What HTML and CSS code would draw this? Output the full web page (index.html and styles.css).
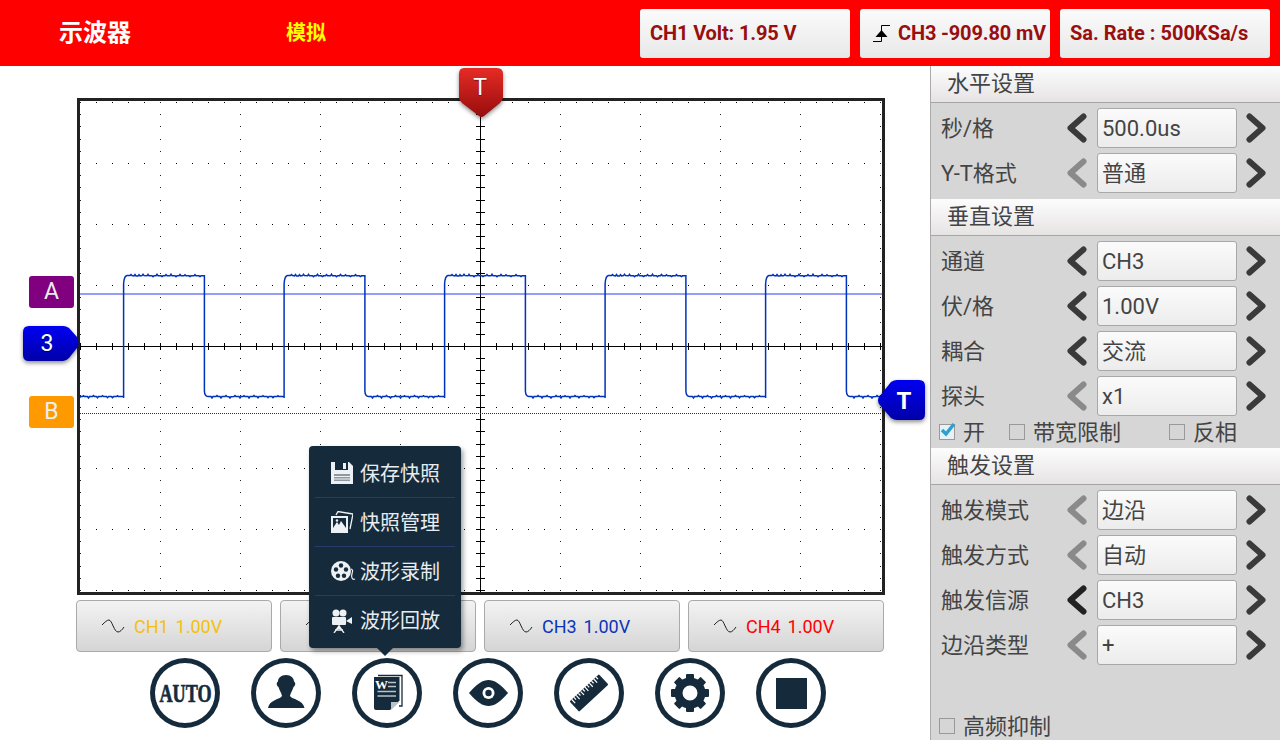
FILE: index.html
```html
<!DOCTYPE html>
<html lang="zh">
<head>
<meta charset="utf-8">
<title>示波器</title>
<link rel="stylesheet" href="styles.css">
</head>
<body>
<div class="app">
  <header class="topbar">
    <div class="title">示波器</div>
    <div class="mode">模拟</div>
    <div class="readouts">
      <div class="readout r1">CH1 Volt: 1.95 V</div>
      <div class="readout r2">
        <svg class="trig" width="18" height="17" viewBox="0 0 18 17"><path d="M0 16.5H8.5V.5H17" fill="none" stroke="#000"/><path d="M8.5 5L14.5 12H2.5Z" fill="#000"/></svg>
        <span>CH3 -909.80 mV</span>
      </div>
      <div class="readout r3">Sa. Rate : 500KSa/s</div>
    </div>
  </header>

  <div class="body">
    <main class="stage">
      <div class="scope">
        <svg class="grid" width="802" height="491" viewBox="80 101 802 491">
          <defs>
            <path id="period" fill="none" stroke="#0033bb" stroke-width="1.500" d="M123.6 398V284Q124 276 127 275.500H130l1-1 1 1 2 .4 1-1.400 1 1.400h2l1-1.200 1 1.200 2-.3 1-1.300 1 1.300 3 .2 1-1.500 1 1.500h3l1 1 1-1 2 0 1-1.400 1 1.400h3l1 .8 1-.8 2 0 1-1.200 1 1.200h3l1-1.600 1 1.600 3 0 1 .9 1-.9h2l1-1.300 1 1.300h3l1-1 1 1h3l1 .8 1-.8h3l1-1.100 1 1.100h3l1 .7 1-.7H204.400V391Q204.600 396.200 208 396.500h3l1 1.500 1-1.500h3l1-.9 1 .9h2l1 1.400 1-1.400h3l1-1 1 1 2 .3 1 1.200 1-1.200 3-.2 1-1 1 1h3l1 1.300 1-1.300h2l1-.8 1 .8h3l1 1.400 1-1.400h3l1-1 1 1h2l1 1.200 1-1.200h3l1-.9 1 .9h3l1 1.100 1-1.100h3l1 1 1-1h3l1-.8 1 .8H284.100"/>
          </defs>
          <g class="minor">
            <line x1="80" y1="102" x2="882" y2="102"/>
            <line x1="80" y1="163" x2="882" y2="163"/>
            <line x1="80" y1="224" x2="882" y2="224"/>
            <line x1="80" y1="285" x2="882" y2="285"/>
            <line x1="80" y1="407" x2="882" y2="407"/>
            <line x1="80" y1="468" x2="882" y2="468"/>
            <line x1="80" y1="529" x2="882" y2="529"/>
            <line x1="80" y1="590" x2="882" y2="590"/>
          </g>
          <g class="columns">
            <line x1="80.500" y1="102" x2="80.500" y2="592"/>
            <line x1="160.500" y1="102" x2="160.500" y2="592"/>
            <line x1="240.500" y1="102" x2="240.500" y2="592"/>
            <line x1="320.500" y1="102" x2="320.500" y2="592"/>
            <line x1="400.500" y1="102" x2="400.500" y2="592"/>
            <line x1="560.500" y1="102" x2="560.500" y2="592"/>
            <line x1="640.500" y1="102" x2="640.500" y2="592"/>
            <line x1="720.500" y1="102" x2="720.500" y2="592"/>
            <line x1="800.500" y1="102" x2="800.500" y2="592"/>
            <line x1="880.500" y1="102" x2="880.500" y2="592"/>
          </g>
          <g class="axes">
            <line x1="80" y1="346.500" x2="882" y2="346.500"/>
            <line x1="480.500" y1="101" x2="480.500" y2="592"/>
          </g>
          <line class="ticks-h" x1="80" y1="346.500" x2="882" y2="346.500"/>
          <line class="ticks-v" x1="480.500" y1="102" x2="480.500" y2="592"/>
          <line class="cursor-a" x1="80" y1="294" x2="882" y2="294"/>
          <line class="cursor-b" x1="80" y1="413.500" x2="882" y2="413.500"/>
          <use href="#period" x="-160.500"/>
          <use href="#period"/>
          <use href="#period" x="160.500"/>
          <use href="#period" x="321"/>
          <use href="#period" x="481.500"/>
          <use href="#period" x="642"/>
        </svg>
      </div>

      <div class="channels">
        <div class="channel ch1"><svg class="sine" width="24" height="14" viewBox="0 0 24 14"><path d="M1 6C4 3 6 1 8 1C11 1 13 13 17 13C19 13 21 11 23 8"/></svg><span>CH1&nbsp;&nbsp;1.00V</span></div>
        <div class="channel ch2"><svg class="sine" width="24" height="14" viewBox="0 0 24 14"><path d="M1 6C4 3 6 1 8 1C11 1 13 13 17 13C19 13 21 11 23 8"/></svg><span>CH2&nbsp;&nbsp;1.00V</span></div>
        <div class="channel ch3"><svg class="sine" width="24" height="14" viewBox="0 0 24 14"><path d="M1 6C4 3 6 1 8 1C11 1 13 13 17 13C19 13 21 11 23 8"/></svg><span>CH3&nbsp;&nbsp;1.00V</span></div>
        <div class="channel ch4"><svg class="sine" width="24" height="14" viewBox="0 0 24 14"><path d="M1 6C4 3 6 1 8 1C11 1 13 13 17 13C19 13 21 11 23 8"/></svg><span>CH4&nbsp;&nbsp;1.00V</span></div>
      </div>

      <div class="toolbar">
        <div class="tool">
          <svg width="70" height="70" viewBox="0 0 70 70"><text class="auto" x="9.500" y="43.500" textLength="52" lengthAdjust="spacingAndGlyphs">AUTO</text></svg>
        </div>
        <div class="tool">
          <svg width="70" height="70" viewBox="0 0 70 70" fill="#152b3c"><path d="M35 17C40 17 43 20 43 23.500C45 24.500 44.500 28 42.500 29C41.500 32.500 39.500 35 39 38C41 41.500 52 41.500 53.500 50H17C18.500 41.500 29 41.500 31 38C30.500 35 28.500 32.500 27.500 29C25.500 28 25 24.500 27 23.500C27 20 30 17 35 17Z"/></svg>
        </div>
        <div class="tool">
          <svg width="70" height="70" viewBox="0 0 70 70"><path d="M26 17.500H50V48H47" fill="none" stroke="#152b3c" stroke-width="1.300"/><path d="M22 19H47.500V42.500L38 52H24Q22 52 22 50Z" fill="#152b3c"/><path d="M39 52V44H47.500Z" fill="#b8c2c9"/><text class="word" x="23" y="31">W</text><path d="M36 24.500H44M36 28.500H44M25.500 33.500H44M25.500 38H44" stroke="#b8c2c9" stroke-width="1.500"/></svg>
        </div>
        <div class="tool">
          <svg width="70" height="70" viewBox="0 0 70 70"><path d="M16 35C24 25.500 30 22 35.500 22C41 22 47 25.500 55 35C47 44.500 41 48 35.500 48C30 48 24 44.500 16 35Z" fill="#152b3c"/><circle cx="35.500" cy="35" r="6" fill="#fff"/><circle cx="35.500" cy="35" r="3.200" fill="#152b3c"/></svg>
        </div>
        <div class="tool">
          <svg width="70" height="70" viewBox="0 0 70 70"><g transform="rotate(-43 35 35)"><rect x="15" y="28" width="40" height="14" rx="1" fill="#152b3c"/><path d="M18 28v5M21 28v3M24 28v5M27 28v3M30 28v5M33 28v3M36 28v5M39 28v3M42 28v5M45 28v3M48 28v5M51 28v3" stroke="#fff" stroke-width="1.200"/></g></svg>
        </div>
        <div class="tool">
          <svg width="70" height="70" viewBox="0 0 70 70" fill="#152b3c"><circle cx="35" cy="35" r="11.500" fill="none" stroke="#152b3c" stroke-width="8"/><g><rect x="31" y="16" width="8" height="7" rx="1"/><rect x="31" y="47" width="8" height="7" rx="1"/><rect x="16" y="31" width="7" height="8" rx="1"/><rect x="47" y="31" width="7" height="8" rx="1"/></g><g transform="rotate(45 35 35)"><rect x="31" y="16" width="8" height="7" rx="1"/><rect x="31" y="47" width="8" height="7" rx="1"/><rect x="16" y="31" width="7" height="8" rx="1"/><rect x="47" y="31" width="7" height="8" rx="1"/></g></svg>
        </div>
        <div class="tool">
          <svg width="70" height="70" viewBox="0 0 70 70"><rect x="20" y="20" width="31" height="31" fill="#152b3c"/></svg>
        </div>
      </div>

      <!-- markers over the scope -->
      <svg class="marker m-top" width="50" height="56" viewBox="0 0 50 56"><defs><linearGradient id="redg" x1="0" y1="0" x2="0" y2="1"><stop offset="0" stop-color="#e62b25"/><stop offset="1" stop-color="#960d0d"/></linearGradient></defs><path d="M8 1H41Q47 1 47 7V30Q47 33 44 36L28 49Q25.500 51 23 49L6 36Q3 33 3 30V7Q3 1 8 1Z" fill="url(#redg)"/></svg>
      <div class="mark-t">T</div>
      <div class="tag tag-a">A</div>
      <div class="tag tag-b">B</div>
      <svg class="marker m-3" width="64" height="42" viewBox="0 0 64 42"><defs><linearGradient id="blueg" x1="0" y1="0" x2="0" y2="1"><stop offset="0" stop-color="#0000f2"/><stop offset="1" stop-color="#0000a8"/></linearGradient></defs><path d="M7 1H41Q44 1 47 3L55 12Q58 18 55 23L47 33Q44 36 41 36H7Q1 36 1 30V7Q1 1 7 1Z" fill="url(#blueg)"/></svg>
      <div class="mark-3">3</div>
      <svg class="marker m-rt" width="54" height="46" viewBox="0 0 54 46"><path d="M15 3Q18 1 21 1H43Q49 1 49 7V35Q49 41 43 41H21Q18 41 15 39L3 25Q1 21 3 18Z" fill="url(#blueg)"/></svg>
      <div class="mark-rt">T</div>

      <div class="popup">
        <div class="popup-row">
          <span class="ico"><svg width="22" height="22" viewBox="0 0 22 22"><path d="M0 0H18L22 4V22H0Z" fill="#eef1f3"/><rect x="4" y="0" width="13" height="8" fill="#152b3c"/><rect x="12" y="1" width="3" height="6" fill="#eef1f3"/><rect x="3" y="12" width="16" height="7" fill="#8d9aa4"/><path d="M3 14.500H19M3 17H19" stroke="#eef1f3"/></svg></span>
          <span class="pop-text">保存快照</span>
        </div>
        <div class="popup-row">
          <span class="ico"><svg width="22" height="22" viewBox="0 0 22 22"><path d="M5 4L7 .500L22 3L19 18" fill="none" stroke="#eef1f3" stroke-width="1.300"/><rect x="0" y="5" width="17" height="17" fill="#eef1f3"/><rect x="2" y="7" width="13" height="10" fill="#152b3c"/><path d="M2 17L6 11L8 14L10 10L15 17Z" fill="#eef1f3"/><circle cx="6" cy="9.500" r="1.200" fill="#eef1f3"/></svg></span>
          <span class="pop-text">快照管理</span>
        </div>
        <div class="popup-row">
          <span class="ico"><svg width="25" height="20" viewBox="0 0 25 20"><circle cx="10" cy="10" r="10" fill="#eef1f3"/><g fill="#152b3c"><circle cx="10" cy="4.500" r="2.200"/><circle cx="15" cy="8.500" r="2.200"/><circle cx="13" cy="14.800" r="2.200"/><circle cx="7" cy="14.800" r="2.200"/><circle cx="5" cy="8.500" r="2.200"/></g><path d="M20 8C24 9 19 14 21 17Q22 19 24 18" fill="none" stroke="#eef1f3" stroke-width="1.200"/></svg></span>
          <span class="pop-text">波形录制</span>
        </div>
        <div class="popup-row">
          <span class="ico"><svg width="22" height="24" viewBox="0 0 22 24" fill="#eef1f3"><circle cx="5" cy="4" r="3.500"/><circle cx="12" cy="4" r="3.500"/><rect x="1" y="8" width="14" height="8" rx="1"/><path d="M15 12L21 8V15L15 12Z"/><path d="M8 16V20M8 17L3 24M8 17L13 24M4 21H12" fill="none" stroke="#eef1f3" stroke-width="1.300"/></svg></span>
          <span class="pop-text">波形回放</span>
        </div>
      </div>
    </main>

    <aside class="panel">
      <section>
        <h2 class="sect">水平设置</h2>
        <div class="rows">
          <div class="row"><span class="label">秒/格</span><svg class="arrow" viewBox="0 0 20 30"><path d="M16.500 3.500L3.500 15L16.500 26.500"/></svg><div class="value">500.0us</div><svg class="arrow" viewBox="0 0 20 30"><path d="M3.500 3.500L16.500 15L3.500 26.500"/></svg></div>
          <div class="row"><span class="label">Y-T格式</span><svg class="arrow off" viewBox="0 0 20 30"><path d="M16.500 3.500L3.500 15L16.500 26.500"/></svg><div class="value">普通</div><svg class="arrow" viewBox="0 0 20 30"><path d="M3.500 3.500L16.500 15L3.500 26.500"/></svg></div>
        </div>
      </section>
      <section>
        <h2 class="sect">垂直设置</h2>
        <div class="rows no-foot">
          <div class="row"><span class="label">通道</span><svg class="arrow" viewBox="0 0 20 30"><path d="M16.500 3.500L3.500 15L16.500 26.500"/></svg><div class="value">CH3</div><svg class="arrow" viewBox="0 0 20 30"><path d="M3.500 3.500L16.500 15L3.500 26.500"/></svg></div>
          <div class="row"><span class="label">伏/格</span><svg class="arrow" viewBox="0 0 20 30"><path d="M16.500 3.500L3.500 15L16.500 26.500"/></svg><div class="value">1.00V</div><svg class="arrow" viewBox="0 0 20 30"><path d="M3.500 3.500L16.500 15L3.500 26.500"/></svg></div>
          <div class="row"><span class="label">耦合</span><svg class="arrow" viewBox="0 0 20 30"><path d="M16.500 3.500L3.500 15L16.500 26.500"/></svg><div class="value">交流</div><svg class="arrow" viewBox="0 0 20 30"><path d="M3.500 3.500L16.500 15L3.500 26.500"/></svg></div>
          <div class="row"><span class="label">探头</span><svg class="arrow off" viewBox="0 0 20 30"><path d="M16.500 3.500L3.500 15L16.500 26.500"/></svg><div class="value">x1</div><svg class="arrow" viewBox="0 0 20 30"><path d="M3.500 3.500L16.500 15L3.500 26.500"/></svg></div>
        </div>
        <div class="checks">
          <label class="check c-on"><span class="box on"><svg width="18" height="16" viewBox="0 0 18 16"><path d="M3 8L7 12L15 2" fill="none" stroke="#2f9fd0" stroke-width="3.500"/></svg></span><span class="txt">开</span></label>
          <label class="check c-bw"><span class="box"></span><span class="txt">带宽限制</span></label>
          <label class="check"><span class="box"></span><span class="txt">反相</span></label>
        </div>
      </section>
      <section class="grow">
        <h2 class="sect">触发设置</h2>
        <div class="rows no-foot">
          <div class="row"><span class="label">触发模式</span><svg class="arrow off" viewBox="0 0 20 30"><path d="M16.500 3.500L3.500 15L16.500 26.500"/></svg><div class="value">边沿</div><svg class="arrow" viewBox="0 0 20 30"><path d="M3.500 3.500L16.500 15L3.500 26.500"/></svg></div>
          <div class="row"><span class="label">触发方式</span><svg class="arrow off" viewBox="0 0 20 30"><path d="M16.500 3.500L3.500 15L16.500 26.500"/></svg><div class="value">自动</div><svg class="arrow" viewBox="0 0 20 30"><path d="M3.500 3.500L16.500 15L3.500 26.500"/></svg></div>
          <div class="row"><span class="label">触发信源</span><svg class="arrow dark" viewBox="0 0 20 30"><path d="M16.500 3.500L3.500 15L16.500 26.500"/></svg><div class="value">CH3</div><svg class="arrow" viewBox="0 0 20 30"><path d="M3.500 3.500L16.500 15L3.500 26.500"/></svg></div>
          <div class="row"><span class="label">边沿类型</span><svg class="arrow off" viewBox="0 0 20 30"><path d="M16.500 3.500L3.500 15L16.500 26.500"/></svg><div class="value">+</div><svg class="arrow" viewBox="0 0 20 30"><path d="M3.500 3.500L16.500 15L3.500 26.500"/></svg></div>
        </div>
        <div class="checks foot">
          <label class="check"><span class="box"></span><span class="txt">高频抑制</span></label>
        </div>
      </section>
    </aside>
  </div>
</div>
</body>
</html>
```

FILE: styles.css
```css
* { box-sizing: border-box; }
html, body { margin: 0; padding: 0; }
body {
  background: #fff;
  font-family: Roboto, "Noto Sans CJK SC", sans-serif;
  color: #444;
}
.app { width: 1280px; height: 740px; display: flex; flex-direction: column; overflow: hidden; }

/* top bar */
.topbar {
  height: 66px; flex: none; background: #f00;
  display: flex; align-items: center; padding-left: 59px;
}
.title { width: 227px; color: #fff; font-size: 24px; font-weight: 700; line-height: 66px; }
.mode { color: #ff0; font-size: 20px; font-weight: 700; line-height: 66px; }
.readouts { margin-left: auto; display: flex; gap: 10px; padding-right: 10px; }
.readout {
  height: 49px; border-radius: 3px;
  background: linear-gradient(#fbfbfb, #e8e8e8);
  color: #990e0e; font-size: 20px; font-weight: 700;
  display: flex; align-items: center; padding-left: 10px; white-space: nowrap;
}
.r1 { width: 210px; letter-spacing: -.13px; }
.r2 { width: 190px; padding-left: 13px; gap: 7px; letter-spacing: -.15px; }
.r3 { width: 210px; }
.trig { flex: none; }

/* main layout */
.body { flex: 1; display: flex; min-height: 0; }
.stage { width: 930px; flex: none; position: relative; padding-top: 32px; }
.scope { margin-left: 77px; width: 808px; height: 497px; border: 3px solid #222; background: #fff; }
.grid { display: block; }
.minor line { stroke: #000; stroke-width: 1; stroke-dasharray: 1 15; shape-rendering: crispEdges; }
.columns line { stroke: #222; stroke-width: 1; stroke-dasharray: 1 11.200; shape-rendering: crispEdges; }
.axes line { stroke: #000; stroke-width: 1; shape-rendering: crispEdges; }
.ticks-h { stroke: #000; stroke-width: 7; stroke-dasharray: 1 15; shape-rendering: crispEdges; }
.ticks-v { stroke: #000; stroke-width: 9; stroke-dasharray: 1 11.200; shape-rendering: crispEdges; }
.cursor-a { stroke: #2a3af0; stroke-width: 1; }
.cursor-b { stroke: #1020c0; stroke-width: 1; stroke-dasharray: 1 1; shape-rendering: crispEdges; }

/* channel buttons */
.channels { display: flex; gap: 8px; margin: 5px 0 0 76px; }
.channel {
  width: 196px; height: 52px; border: 1px solid #aaa; border-radius: 4px;
  background: linear-gradient(#f3f3f3, #d5d5d5);
  display: flex; align-items: center; padding-left: 24px; gap: 9px;
  font-size: 18px; word-spacing: -1px; white-space: nowrap;
}
.sine { flex: none; }
.sine path { fill: none; stroke: #222; stroke-width: 1; }
.ch1 { color: #f2c010; }
.ch2 { color: #0a9a20; }
.ch3 { color: #0a35b8; }
.ch4 { color: #f00; }

/* round toolbar */
.toolbar { display: flex; gap: 31px; margin: 6px 0 0 150px; }
.tool { width: 70px; height: 70px; border-radius: 50%; box-shadow: inset 0 0 0 5px #152b3c; flex: none; }
.tool svg { display: block; overflow: visible; }
.auto { font-family: "Liberation Serif", serif; font-weight: 700; font-size: 25px; fill: #152b3c; stroke: #152b3c; stroke-width: .7; }
.word { font-family: "Liberation Serif", serif; font-weight: 700; font-size: 13px; fill: #fff; }

/* markers */
.marker { position: absolute; filter: drop-shadow(0 2px 2px rgba(0,0,0,.45)); }
.m-top { left: 456px; top: 1px; }
.mark-t, .mark-3, .mark-rt, .tag { position: absolute; color: #fff; text-align: center; }
.mark-t { left: 458px; top: 2px; width: 44px; line-height: 40px; font-size: 23px; text-shadow: 0 1px 1px rgba(0,0,0,.4); }
.tag { left: 29px; width: 45px; height: 32px; line-height: 32px; border-radius: 3px; font-size: 23px; color: #eee; }
.tag-a { top: 210px; background: #800080; }
.tag-b { top: 330px; background: #ff9900; }
.m-3 { left: 22px; top: 259px; }
.mark-3 { left: 24px; top: 260px; width: 46px; line-height: 35px; font-size: 23px; text-shadow: 0 1px 1px rgba(0,0,0,.5); }
.m-rt { left: 876px; top: 313px; }
.mark-rt { left: 882px; top: 315px; width: 44px; line-height: 41px; font-size: 24px; font-weight: 700; }

/* popup */
.popup {
  position: absolute; left: 309px; top: 380px; width: 152px; height: 202px;
  background: #152b3c; border-radius: 4px; padding: 3px 6px 0;
  box-shadow: 2px 3px 5px rgba(0,0,0,.4);
  display: flex; flex-direction: column; color: #e8ecef; font-size: 20px;
}
.popup::after {
  content: ""; position: absolute; left: 68px; bottom: -8px;
  border-left: 8px solid transparent; border-right: 8px solid transparent; border-top: 8px solid #152b3c;
}
.popup-row {
  height: 49px; flex: none; display: flex; align-items: center; padding-left: 16px;
  border-bottom: 1px solid #2b3a68; white-space: nowrap;
}
.popup-row:last-child { border-bottom: 0; }
.ico { width: 30px; flex: none; display: flex; align-items: center; }
.pop-text { margin: -2px 0 0 -1px; }

/* right panel */
.panel { width: 350px; flex: none; border-left: 1px solid #aaa; background: #d6d6d6; display: flex; flex-direction: column; }
.sect {
  margin: 0; height: 37px; padding-left: 16px; font-size: 22px; font-weight: 400; line-height: 36px; color: #444;
  background: linear-gradient(#fdfdfd, #e6e3e3); border-bottom: 1px solid #a6a6a6;
}
.rows { padding: 5px 0 6px 10px; display: flex; flex-direction: column; gap: 5px; }
.rows.no-foot { padding-bottom: 0; }
.row { display: flex; align-items: center; height: 40px; }
.label { width: 126px; font-size: 22px; white-space: nowrap; margin-top: -4px; }
.arrow { width: 20px; height: 30px; flex: none; }
.arrow path { fill: none; stroke: #3a3a3a; stroke-width: 6; stroke-linecap: round; stroke-linejoin: round; }
.arrow.off path { stroke: #8a8a8a; }
.arrow.dark path { stroke: #222; }
.value {
  width: 140px; height: 40px; margin: 0 9px 0 10px; padding-left: 4px;
  border: 1px solid #a8a8a8; border-radius: 3px; background: linear-gradient(#fbfbfb, #ececec);
  font-size: 22px; line-height: 40px; color: #444; white-space: nowrap;
}
.checks { height: 32px; display: flex; align-items: center; padding-left: 8px; font-size: 22px; }
.check { display: flex; align-items: center; gap: 8px; white-space: nowrap; }
.txt { margin-top: -4px; }
.c-on { width: 70px; }
.c-bw { width: 160px; }
.box { width: 16px; height: 16px; border: 1px solid #999; flex: none; display: block; position: relative; }
.box.on { background: #e8f2f6; }
.box svg { position: absolute; left: -1px; top: -3px; }
.grow { flex: 1; display: flex; flex-direction: column; }
.foot { margin-top: auto; height: 28px; }
```
